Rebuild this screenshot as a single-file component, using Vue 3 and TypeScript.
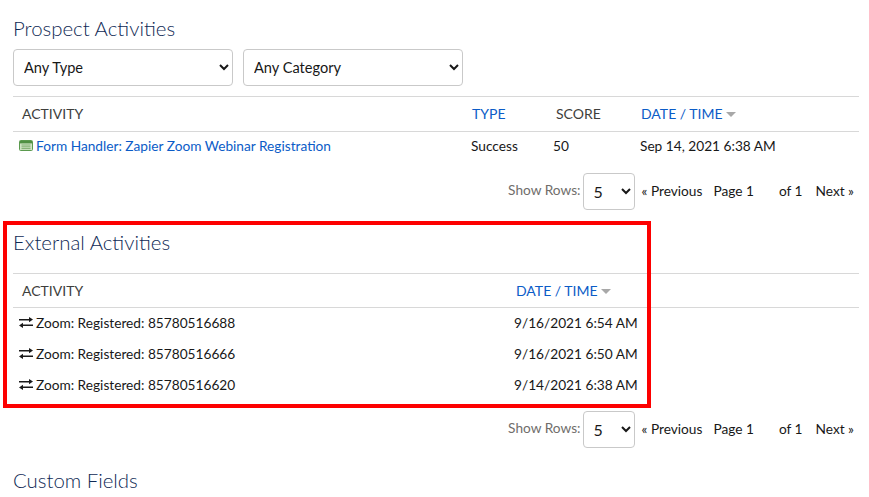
<script setup lang="ts">
interface ProspectRow {
  activity: string;
  type: string;
  score: number;
  date: string;
}

const prospectRows: ProspectRow[] = [
  {
    activity: "Form Handler: Zapier Zoom Webinar Registration",
    type: "Success",
    score: 50,
    date: "Sep 14, 2021 6:38 AM",
  },
];

const externalRows = [
  { activity: "Zoom: Registered: 85780516688", date: "9/16/2021 6:54 AM" },
  { activity: "Zoom: Registered: 85780516666", date: "9/16/2021 6:50 AM" },
  { activity: "Zoom: Registered: 85780516620", date: "9/14/2021 6:38 AM" },
];
</script>

<template>
  <main class="page">
    <section class="block block--prospect">
      <h2 class="block__title">Prospect Activities</h2>
      <div class="filters">
        <select class="filters__select">
          <option>Any Type</option>
        </select>
        <select class="filters__select">
          <option>Any Category</option>
        </select>
      </div>

      <div class="row row--head row--prospect">
        <span class="cell-activity">ACTIVITY</span>
        <a class="link cell-type">TYPE</a>
        <span class="cell-score">SCORE</span>
        <a class="link cell-date">DATE / TIME<i class="caret"></i></a>
      </div>
      <div v-for="row in prospectRows" :key="row.activity" class="row row--body row--prospect">
        <span class="cell-icon">
          <svg class="icon" viewBox="0 0 14 11" aria-hidden="true">
            <rect x="0.5" y="0.5" width="13" height="10" rx="1" fill="#cfe3c4" stroke="#5b9a4e" />
            <rect x="1" y="1" width="12" height="2.4" fill="#4f8f42" />
            <path d="M2.5 5h9M2.5 6.8h9M2.5 8.6h9" stroke="#7fae70" stroke-width="1" />
          </svg>
          <a class="link">{{ row.activity }}</a>
        </span>
        <span class="cell-type-v">{{ row.type }}</span>
        <span class="cell-score-v">{{ row.score }}</span>
        <span class="cell-date-v">{{ row.date }}</span>
      </div>

      <div class="pager">
        <span class="pager__label">Show Rows:</span>
        <select class="pager__select"><option>5</option></select>
        <span class="pager__prev">« Previous</span>
        <span class="pager__page">Page 1</span>
        <span class="pager__of">of 1</span>
        <span class="pager__next">Next »</span>
      </div>
    </section>

    <section class="block block--external">
      <h2 class="block__title block__title--ext">External Activities</h2>
      <div class="row row--head row--external">
        <span class="cell-activity">ACTIVITY</span>
        <a class="link cell-date-ext">DATE / TIME<i class="caret"></i></a>
      </div>
      <div v-for="row in externalRows" :key="row.activity" class="row row--ext-body row--external">
        <span class="cell-icon">
          <svg class="icon icon--swap" viewBox="0 0 14 11" aria-hidden="true">
            <path d="M0 1.9h10V0l4 2.6-4 2.6V3.4H0zM14 7.6H4V5.8L0 8.4 4 11V9.1h10z" fill="#1a1a1a" />
          </svg>
          <span>{{ row.activity }}</span>
        </span>
        <span class="cell-date-ext-v">{{ row.date }}</span>
      </div>

      <div class="pager pager--ext">
        <span class="pager__label">Show Rows:</span>
        <select class="pager__select"><option>5</option></select>
        <span class="pager__prev">« Previous</span>
        <span class="pager__page">Page 1</span>
        <span class="pager__of">of 1</span>
        <span class="pager__next">Next »</span>
      </div>

      <div class="highlight" aria-hidden="true"></div>
    </section>

    <h2 class="block__title block__title--custom">Custom Fields</h2>
  </main>
</template>

<style>
html,
body {
  background: #fff;
  overflow: hidden;
}
</style>

<style scoped>
.page {
  width: 846px;
  margin-left: 13px;
  font-family: "Lato", "Open Sans", sans-serif;
  font-size: 13.7px;
  color: #181818;
}

.block {
  position: relative;
}

.block--prospect {
  padding-top: 17px;
}

.block--external {
  margin-top: 21px;
}

.block__title {
  margin: 0;
  padding-bottom: 2px;
  font-size: 20.4px;
  font-weight: 300;
  line-height: 22px;
  color: #0f2a55;
}

.block__title--ext {
  height: 40px;
}

.block__title--custom {
  margin-top: 21px;
}

.filters {
  display: flex;
  gap: 10px;
  margin-top: 8px;
}

.filters__select {
  width: 220px;
  height: 37px;
  padding: 0 6px;
  background-color: #fff;
  border: 1px solid #c9c9c9;
  border-radius: 4px;
  font: inherit;
  font-size: 14.6px;
  color: #181818;
}

.row {
  display: grid;
  align-items: center;
}

.row--prospect {
  grid-template-columns: 459px 82px 84px 1fr;
}

.row--external {
  grid-template-columns: 503px 1fr;
}

.row--head {
  height: 33px;
  border-top: 1px solid #d8d8d8;
  border-bottom: 1px solid #d8d8d8;
  font-size: 14px;
  color: #3e3e3c;
}

.block--prospect .row--head {
  height: 33px;
  padding-bottom: 1px;
  margin-top: 10px;
}

.row--body {
  height: 26px;
  padding-bottom: 4px;
}

.row--ext-body {
  height: 29px;
  padding-bottom: 2px;
}

.cell-activity {
  padding-left: 9px;
}

.cell-icon {
  display: flex;
  align-items: center;
  gap: 3px;
  padding-left: 6px;
}

.icon {
  width: 14px;
  height: 11px;
  flex: none;
}

.link {
  color: #0b5cc7;
}

.caret {
  display: inline-block;
  width: 0;
  height: 0;
  margin-left: 3px;
  vertical-align: 2px;
  border-top: 5px solid #a8a8a8;
  border-left: 5px solid transparent;
  border-right: 5px solid transparent;
}

.cell-score {
  padding-left: 2px;
}

.cell-score-v {
  margin-left: -1px;
}

.cell-date {
  padding-left: 3px;
}

.cell-date-v {
  padding-left: 2px;
}

.cell-type-v {
  margin-left: -1px;
}

.cell-date-ext-v {
  margin-left: -2px;
}

.pager {
  display: flex;
  align-items: center;
  justify-content: flex-end;
  height: 37px;
  margin-top: 11px;
  padding-right: 5px;
}

.pager--ext {
  margin-top: 10px;
}

.pager span {
  margin-top: -2px;
}

.pager .pager__label {
  margin-top: -5px;
  margin-right: 2px;
  color: #706e6b;
}

.pager__select {
  width: 52px;
  height: 37px;
  padding: 0 6px;
  background-color: #fff;
  border: 1px solid #c9c9c9;
  border-radius: 4px;
  font: inherit;
  font-size: 16px;
  color: #181818;
}

.pager__prev {
  margin-left: 7px;
}

.pager__page {
  margin-left: 11px;
}

.pager__of {
  margin-left: 25px;
}

.pager__next {
  margin-left: 13px;
}

/* 截图上的红色标注框，盖在内容之上 */
.highlight {
  position: absolute;
  left: -10px;
  top: -10px;
  width: 648px;
  height: 187px;
  box-sizing: border-box;
  border: 4px solid #fd0000;
  pointer-events: none;
}
</style>
